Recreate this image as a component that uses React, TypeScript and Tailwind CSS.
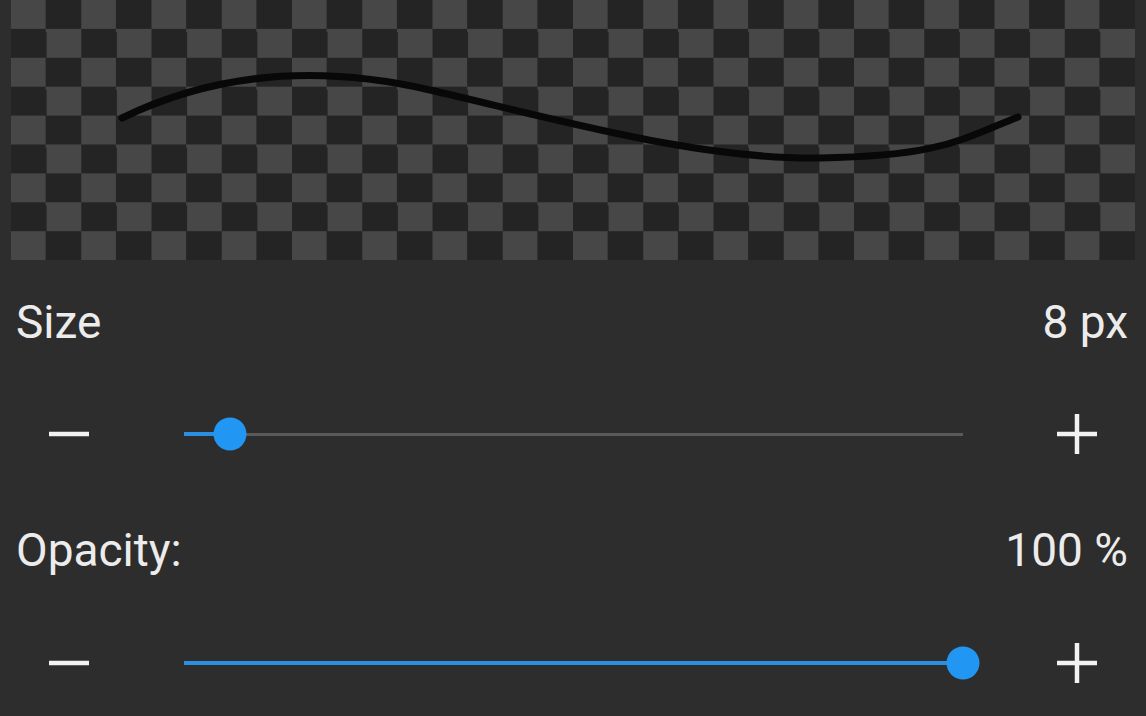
import React from "react";

function Minus() {
  return (
    <svg width="42" height="10" viewBox="0 0 42 10" className="shrink-0">
      <line x1="1" y1="5" x2="41" y2="5" stroke="#f2f2f2" strokeWidth="4.5" />
    </svg>
  );
}

function Plus() {
  return (
    <svg width="42" height="42" viewBox="0 0 42 42" className="shrink-0">
      <line x1="1" y1="21" x2="41" y2="21" stroke="#f2f2f2" strokeWidth="4.5" />
      <line x1="21" y1="1" x2="21" y2="41" stroke="#f2f2f2" strokeWidth="4.5" />
    </svg>
  );
}

function Slider({ percent }: { percent: number }) {
  return (
    <div className="flex items-center h-[64px]">
      <div className="ml-[48px]">
        <Minus />
      </div>
      <div className="relative ml-[94px] w-[779px] h-[32px] flex items-center">
        <div className="w-full h-[3px] bg-[#5a5a5a]" />
        <div
          className="absolute left-0 top-1/2 -translate-y-1/2 h-[4px] bg-[#2a8fe0]"
          style={{ width: `${percent}%` }}
        />
        <div
          className="absolute top-1/2 -translate-x-1/2 -translate-y-1/2 w-[33px] h-[33px] rounded-full bg-[#2196f3]"
          style={{ left: `${percent}%` }}
        />
      </div>
      <div className="ml-[93px]">
        <Plus />
      </div>
    </div>
  );
}

function Row({ label, value }: { label: string; value: string }) {
  return (
    <div className="flex justify-between items-start pl-[16px] pr-[18px] text-[46px] leading-[46px] text-[#ececec]">
      <span>{label}</span>
      <span>{value}</span>
    </div>
  );
}

export default function App() {
  return (
    <div
      className="w-[1146px] h-[716px] overflow-hidden bg-[#2d2d2d] flex flex-col"
      style={{ fontFamily: "Roboto, 'Noto Sans', sans-serif" }}
    >
      {/* preview of the brush on a transparency grid */}
      <div className="relative ml-[11px] w-[1124px] h-[260px] shrink-0 bg-[repeating-conic-gradient(#242424_0%_25%,#474747_0%_50%)] bg-[length:70.25px_57.8px]">
        <svg
          className="absolute inset-0"
          width="1124"
          height="260"
          viewBox="11 0 1124 260"
        >
          <path
            d="M122 118 C 200 80, 300 60, 430 90 S 700 160, 820 158 S 960 140, 1018 117"
            fill="none"
            stroke="#080808"
            strokeWidth="7"
            strokeLinecap="round"
          />
        </svg>
      </div>

      <div className="mt-[39px]">
        <Row label="Size" value="8 px" />
      </div>
      <div className="mt-[57px]">
        <Slider percent={5.9} />
      </div>

      <div className="mt-[61px]">
        <Row label="Opacity:" value="100 %" />
      </div>
      <div className="mt-[58px]">
        <Slider percent={100} />
      </div>
    </div>
  );
}
